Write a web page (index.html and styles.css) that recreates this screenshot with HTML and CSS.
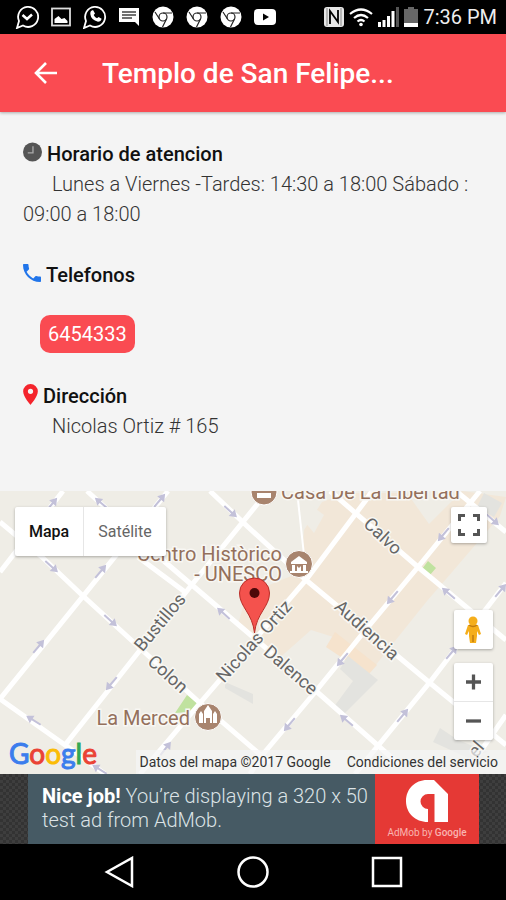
FILE: index.html
```html
<!DOCTYPE html>
<html lang="es">

<head>
    <meta charset="UTF-8">
    <meta name="viewport" content="width=device-width, initial-scale=1.0">
    <title>Templo de San Felipe</title>
    <link rel="stylesheet" href="styles.css">
</head>

<body>

    <!-- Phone status bar -->
    <div class="status-bar">
        <div class="notifications">
            <svg viewBox="0 0 24 24">
                <path d="M2 23l2-7A10 10 0 1 1 8 20.500z" fill="none" stroke="#fff" stroke-width="1.800" />
                <path d="M7.500 10l4.500 4 5-4.500" fill="none" stroke="#fff" stroke-width="2.500" />
            </svg>
            <svg viewBox="0 0 24 24">
                <rect x="3" y="3.500" width="18" height="17" fill="none" stroke="#ddd" stroke-width="1.800" />
                <path d="M5.500 18v-4l4-3 3 3 3-1 3 3v2z" fill="#fff" />
            </svg>
            <svg viewBox="0 0 24 24">
                <path d="M1 23l2-7A10 10 0 1 1 7 20.500z" fill="none" stroke="#fff" stroke-width="1.800" />
                <path d="M8 6l2-1 2 3.500-1.300 1.500q1 2.300 3.300 3.300l1.600-1.400 3 1.800q-.6 3-3.600 3Q8 15 7.300 9 7.200 7 8 6z" fill="#fff" />
            </svg>
            <svg viewBox="0 0 24 24">
                <path d="M2 3h20v18l-4-4H2z" fill="#fff" />
                <path d="M5 7h14M5 10h14M5 13h10" stroke="#444" stroke-width="1.300" />
            </svg>
            <svg viewBox="0 0 24 24"><use href="#chrome" /></svg>
            <svg viewBox="0 0 24 24"><use href="#chrome" /></svg>
            <svg viewBox="0 0 24 24"><use href="#chrome" /></svg>
            <svg viewBox="0 0 24 24">
                <rect x="1" y="4" width="22" height="16" rx="4" fill="#fff" />
                <path d="M10 8.500l6 3.500-6 3.500z" fill="#000" />
            </svg>
        </div>
        <div class="system">
            <svg class="nfc" viewBox="0 0 20 20">
                <rect x="0" y="0" width="20" height="20" rx="3" fill="#e8e8e8" />
                <path d="M6 17V4l8 11V3" fill="none" stroke="#000" stroke-width="1.800" />
                <path d="M3 1v18M17 1v18" stroke="#888" stroke-width="1" />
            </svg>
            <svg class="wifi" viewBox="0 0 24 20">
                <path d="M1 7q11-9 22 0M5 11q7-6 14 0M8.500 14.500q3.500-3 7 0" fill="none" stroke="#fff" stroke-width="2.200" />
                <circle cx="12" cy="17.500" r="1.800" fill="#fff" />
            </svg>
            <svg class="signal" viewBox="0 0 21 20">
                <path d="M0 15h3v5H0zM4.500 13h3v7h-3zM9 9h3v11H9zM13.500 4h3v16h-3z" fill="#fff" />
                <path d="M18 0h3v20h-3z" fill="#555" />
            </svg>
            <svg class="battery" viewBox="0 0 14 20">
                <path d="M4 0h6v2h4v14H0V2h4z" fill="#666" />
                <path d="M0 16h14v4H0z" fill="#fff" />
            </svg>
            <span class="clock">7:36 PM</span>
        </div>
    </div>

    <header>
        <button class="back" aria-label="Volver">
            <svg viewBox="0 0 24 24"><path d="M23 12H2M12 2L2 12l10 10" fill="none" stroke="#fff" stroke-width="2.600" /></svg>
        </button>
        <h1 class="title">Templo de San Felipe...</h1>
    </header>

    <main class="content">
        <section class="info">
            <h2>
                <svg class="icon-clock" viewBox="0 0 20 20">
                    <circle cx="10" cy="10" r="10" fill="#555" />
                    <path d="M10.500 4v7H5" fill="none" stroke="#aaa" stroke-width="1.400" />
                </svg>
                Horario de atencion
            </h2>
            <p>Lunes a Viernes -Tardes: 14:30 a 18:00 Sábado : 09:00 a 18:00</p>
        </section>

        <section class="info">
            <h2>
                <svg class="icon-phone" viewBox="3 3 18 18">
                    <path d="M6.620 10.790c1.440 2.830 3.760 5.140 6.590 6.590l2.200-2.200c.27-.27.67-.36 1.020-.24 1.120.37 2.330.57 3.570.57.55 0 1 .45 1 1V20c0 .55-.45 1-1 1C10.610 21 3 13.390 3 4c0-.55.45-1 1-1h3.500c.55 0 1 .45 1 1 0 1.250.2 2.450.57 3.570.11.35.03.74-.25 1.020z" fill="#2175ea" />
                </svg>
                Telefonos
            </h2>
            <a class="phone" href="tel:6454333">6454333</a>
        </section>

        <section class="info">
            <h2>
                <svg class="icon-pin" viewBox="5 2 14 20">
                    <path d="M12 2a7 7 0 0 0-7 7c0 5.250 7 13 7 13s7-7.750 7-13a7 7 0 0 0-7-7zm0 9.500a2.500 2.500 0 1 1 0-5 2.500 2.500 0 0 1 0 5z" fill="#f4242c" />
                </svg>
                Dirección
            </h2>
            <p>Nicolas Ortiz # 165</p>
        </section>
    </main>

    <div class="map">
        <svg class="map-canvas" viewBox="0 491 506 283" preserveAspectRatio="xMidYMid slice">
            <defs>
                <symbol id="chrome" viewBox="0 0 24 24">
                    <circle cx="12" cy="12" r="10.500" fill="#fff" />
                    <circle cx="12" cy="12" r="4" fill="none" stroke="#222" stroke-width="1.200" />
                    <path d="M12 8h9M8.500 14L4 7M15.500 14l-4 8" stroke="#222" stroke-width="1.200" />
                </symbol>
                <path id="arrow" d="M-9-1H1V-4.500L8 0 1 4.500V1H-9z" fill="#c3c1d9" />
            </defs>

            <!-- Blocks -->
            <rect x="0" y="491" width="506" height="283" fill="#efede6" />
            <path d="M304 530l18-28 25-9 60 0 22 31 33-33 44 6-6 19-47 55-26 30-52 65-32-26-32-10-35 31-38-37 9-30 54-22z" fill="#f2e7d8" />
            <path d="M335 632l42 33-9 10-42-28z" fill="#f6e3cd" />
            <path d="M304 500l20 15-10 18-15-18z" fill="#efede6" />
            <path d="M348 656l30 24-35 35-10-7 20-27-13-12zM225 682l28 12v10l-28-16zM440 728l18 12 30 12-20 6-35-16zM484 493l18 10-8 14-17-10z" fill="#e3e3df" />
            <path d="M428 561l8 7-6 7-8-6zM187 695l11 9-9 8-14 1z" fill="#c0e29f" />

            <!-- Streets -->
            <g fill="none" stroke="#fff" stroke-width="5">
                <path d="M0 699L168 491M65 745L190 587 268 491M140 774L200 703 306 580 366 500 372 491M264 753L316 691 368 627 418 567 480 491M250 774L264 753M355 774L430 682 506 583M480 752L506 715M0 572L63 491" />
                <path d="M0 522L42 557 82 595 200 703 270 763M87 491L165 562 253 637 316 691 400 765M138 557L185 592M210 491L248 527 306 580 430 683 506 745M330 491L418 567 506 640M456 491L506 532M0 699L65 745 105 774" />
            </g>
            <path d="M298 500L304 555" stroke="#fff" stroke-width="2" />

            <!-- One way arrows -->
            <use href="#arrow" transform="translate(52 567) rotate(42)" />
            <use href="#arrow" transform="translate(101 571) rotate(-50)" />
            <use href="#arrow" transform="translate(111 621) rotate(42)" />
            <use href="#arrow" transform="translate(101 503) rotate(-140)" />
            <use href="#arrow" transform="translate(160 500) rotate(-50)" />
            <use href="#arrow" transform="translate(52 504) rotate(-50)" />
            <use href="#arrow" transform="translate(231 512) rotate(42)" />
            <use href="#arrow" transform="translate(223 613) rotate(-138)" />
            <use href="#arrow" transform="translate(39 646) rotate(-50)" />
            <use href="#arrow" transform="translate(111 684) rotate(130)" />
            <use href="#arrow" transform="translate(33 720) rotate(-148)" />
            <use href="#arrow" transform="translate(166 748) rotate(-52)" />
            <use href="#arrow" transform="translate(99 769) rotate(-148)" />
            <use href="#arrow" transform="translate(342 660) rotate(130)" />
            <use href="#arrow" transform="translate(346 720) rotate(-140)" />
            <use href="#arrow" transform="translate(289 725) rotate(130)" />
            <use href="#arrow" transform="translate(403 715) rotate(-50)" />
            <use href="#arrow" transform="translate(443 535) rotate(130)" />
            <use href="#arrow" transform="translate(392 598) rotate(130)" />
            <use href="#arrow" transform="translate(448 593) rotate(-140)" />
            <use href="#arrow" transform="translate(493 520) rotate(42)" />
            <use href="#arrow" transform="translate(501 590) rotate(-50)" />
            <use href="#arrow" transform="translate(452 652) rotate(-50)" />

            <!-- Street names -->
            <g class="street">
                <text transform="translate(161 623) rotate(-50)">Bustillos</text>
                <text transform="translate(255 642) rotate(-48)">Nicolas Ortiz</text>
                <text transform="translate(167 675) rotate(42)">Colon</text>
                <text transform="translate(290 671) rotate(41)">Dalence</text>
                <text transform="translate(366 631) rotate(42)">Audiencia</text>
                <text transform="translate(382 537) rotate(43)">Calvo</text>
                <text transform="translate(477 750) rotate(-50)">el</text>
            </g>

            <!-- Places -->
            <g class="place">
                <text x="281" y="499">Casa De La Libertad</text>
                <text x="282" y="561" text-anchor="end">Centro Històrico</text>
                <text x="282" y="581" text-anchor="end">- UNESCO</text>
                <text x="190" y="725" text-anchor="end">La Merced</text>
            </g>
            <g stroke="#fff" stroke-width="1">
                <circle cx="264" cy="492" r="13" fill="#a8846e" />
                <circle cx="299" cy="564" r="13.500" fill="#a8846e" />
                <circle cx="208" cy="717" r="13.500" fill="#a8846e" />
            </g>
            <path d="M257 493h14v5h-14zM291 562l8-6 8 6v2h-16zM292 565h3v6h-3zM303 565h3v6h-3zM297 566l2 2 2-2v5h-4zM290 571h18v2h-18z" fill="#fff" />
            <path d="M199 723v-9l2-3 2 3v9zM213 723v-9l2-3 2 3v9zM204 723v-12l4-6 4 6v12h-2v-5h-4v5z" fill="#fff" />

            <!-- Marker -->
            <path d="M254.500 633c-2-20-15-26-15-40a15 15 0 0 1 30 0c0 14-13 20-15 40z" fill="#f4524d" stroke="#b92d28" />
            <circle cx="254.500" cy="593" r="5" fill="#4d0909" />
        </svg>

        <div class="map-type">
            <button class="active">Mapa</button>
            <button>Satélite</button>
        </div>

        <button class="fullscreen" aria-label="Pantalla completa">
            <svg viewBox="0 0 22 22"><path d="M1.500 7V1.500H7M15 1.500h5.500V7M20.500 15v5.500H15M7 20.500H1.500V15" fill="none" stroke="#555" stroke-width="3" /></svg>
        </button>

        <div class="map-controls">
            <button class="pegman" aria-label="Street View">
                <svg viewBox="0 0 16 27">
                    <path d="M3 9h10l3 9-2 1-2-4v5l-1 7H5l-1-7v-5l-2 4-2-1z" fill="#f5ae1b" />
                    <circle cx="8" cy="5" r="4.500" fill="#f5ae1b" />
                    <path d="M4 9q4 3 8 0M8 19v7" fill="none" stroke="#c07c10" stroke-width="1.500" />
                </svg>
            </button>
            <div class="zoom">
                <button aria-label="Acercar">
                    <svg viewBox="0 0 16 16"><path d="M0 8h16M8 0v16" stroke="#555" stroke-width="3.500" /></svg>
                </button>
                <button aria-label="Alejar">
                    <svg viewBox="0 0 16 16"><path d="M0 8h16" stroke="#555" stroke-width="3.500" /></svg>
                </button>
            </div>
        </div>

        <div class="map-footer">
            <a class="google" href="#"><span class="blue">G</span><span class="red">o</span><span class="yellow">o</span><span class="blue">g</span><span class="green">l</span><span class="red">e</span></a>
            <div class="credits">
                <span>Datos del mapa ©2017 Google</span>
                <a href="#">Condiciones del servicio</a>
            </div>
        </div>
    </div>

    <!-- Banner -->
    <div class="ad">
        <div class="ad-text"><b>Nice job!</b> You’re displaying a 320 x 50 test ad from AdMob.</div>
        <div class="ad-logo">
            <svg viewBox="0 0 42 42">
                <path d="M22 42C9 42 0 33 0 21S9 0 21 0h7l14 14v28H28.500V14H22a7.500 7.500 0 0 0 0 15z" fill="#fff" />
            </svg>
            <div>AdMob by <b>Google</b></div>
        </div>
    </div>

    <!-- Phone navigation -->
    <nav class="nav-bar">
        <button aria-label="Atrás">
            <svg viewBox="0 0 32 32"><path d="M29 2v28L4 16z" fill="none" stroke="#fff" stroke-width="2.500" /></svg>
        </button>
        <button aria-label="Inicio">
            <svg viewBox="0 0 32 32"><circle cx="16" cy="16" r="14.500" fill="none" stroke="#fff" stroke-width="2.500" /></svg>
        </button>
        <button aria-label="Recientes">
            <svg viewBox="0 0 32 32"><rect x="2" y="2" width="28" height="28" fill="none" stroke="#fff" stroke-width="2.500" /></svg>
        </button>
    </nav>

</body>

</html>
```

FILE: styles.css
```css
/* General Reset */
* {
    margin: 0;
    padding: 0;
    box-sizing: border-box;
}

body {
    font-family: Roboto, Arial, sans-serif;
    background-color: #f4f4f4;
    color: #333;
    min-height: 100vh;
    display: flex;
    flex-direction: column;
}

button {
    border: none;
    background: none;
    font-family: inherit;
    cursor: pointer;
}

a {
    color: inherit;
    text-decoration: none;
}

svg {
    display: block;
}

/* Status bar */
.status-bar {
    display: flex;
    justify-content: space-between;
    align-items: center;
    height: 34px;
    padding: 0 9px 0 15px;
    background-color: #000;
    color: #eee;
}

.notifications {
    display: flex;
    gap: 10px;
}

.notifications svg {
    width: 24px;
    height: 24px;
}

.system {
    display: flex;
    align-items: center;
    gap: 5px;
}

.system svg {
    height: 20px;
}

.nfc {
    width: 20px;
}

.wifi {
    width: 24px;
}

.signal {
    width: 21px;
}

.battery {
    width: 14px;
}

.clock {
    font-size: 20px;
}

/* Header */
header {
    display: flex;
    align-items: center;
    gap: 44px;
    height: 78px;
    padding: 0 34px;
    background-color: #fa4b52;
    color: white;
    box-shadow: 0 1px 3px rgba(0, 0, 0, 0.3);
}

.back svg {
    width: 24px;
    height: 24px;
}

.title {
    font-size: 28px;
    font-weight: 500;
}

/* Place details */
.content {
    flex: 1 0 auto;
    padding: 27px 23px 40px;
}

.info {
    margin-bottom: 28px;
    font-size: 20px;
    line-height: 30px;
}

.info:last-child {
    margin-bottom: 0;
}

.info h2 {
    display: flex;
    align-items: center;
    gap: 5px;
    font-size: 20px;
    font-weight: 500;
    color: #111;
}

.info h2 svg {
    margin-bottom: 4px;
}

.info p {
    padding-bottom: 3px;
    font-weight: 300;
    text-indent: 29px;
}

.icon-clock {
    width: 19px;
    height: 20px;
}

.icon-phone {
    width: 18px;
    height: 18px;
}

.icon-pin {
    width: 15px;
    height: 21px;
}

.phone {
    display: block;
    width: fit-content;
    margin: 25px 0 0 17px;
    padding: 4px 8px;
    border-radius: 10px;
    background-color: #fa4b52;
    color: white;
}

/* Map */
.map {
    position: relative;
    height: 283px;
    overflow: hidden;
}

.map-canvas {
    width: 100%;
    height: 100%;
}

.street text {
    font-size: 18px;
    fill: #666;
    stroke: #f8f7f3;
    stroke-width: 3px;
    paint-order: stroke;
    text-anchor: middle;
    dominant-baseline: middle;
}

.place text {
    font-size: 20px;
    fill: #94705c;
    stroke: #f8f7f3;
    stroke-width: 3px;
    paint-order: stroke;
}

.map-type,
.fullscreen,
.zoom,
.pegman {
    background-color: white;
    border-radius: 2px;
    box-shadow: 0 1px 3px rgba(0, 0, 0, 0.3);
}

.map-type {
    position: absolute;
    top: 16px;
    left: 15px;
    display: flex;
}

.map-type button {
    height: 49px;
    padding: 0 14px;
    font-size: 16px;
    color: #666;
}

.map-type .active {
    border-right: 1px solid #e6e6e6;
    font-weight: 500;
    color: #111;
}

.fullscreen {
    position: absolute;
    top: 16px;
    right: 19px;
    padding: 7px;
}

.fullscreen svg {
    width: 22px;
    height: 22px;
}

.map-controls {
    position: absolute;
    right: 13px;
    bottom: 34px;
    display: flex;
    flex-direction: column;
    gap: 14px;
}

.pegman {
    padding: 6px 11px;
}

.pegman svg {
    width: 16px;
    height: 27px;
}

.zoom button {
    display: block;
    padding: 11px 12px;
}

.zoom button + button {
    border-top: 1px solid #e6e6e6;
}

.zoom svg {
    width: 15px;
    height: 16px;
}

.map-footer {
    position: absolute;
    left: 0;
    right: 0;
    bottom: 0;
    display: flex;
    justify-content: space-between;
    align-items: flex-end;
    padding-left: 9px;
}

.google {
    font-family: Lato, sans-serif;
    font-size: 28px;
    line-height: 42px;
    -webkit-text-stroke: 1px;
}

.blue {
    color: #3b7ded;
}

.red {
    color: #ea4335;
}

.yellow {
    color: #fbbc05;
}

.green {
    color: #34a853;
}

.credits {
    display: flex;
    gap: 16px;
    padding: 0 8px 0 4px;
    background-color: rgba(245, 245, 245, 0.7);
    font-size: 14px;
    line-height: 24px;
}

/* Ad banner */
.ad {
    display: flex;
    height: 70px;
    padding: 0 27px 0 28px;
    background: repeating-conic-gradient(#333 0 25%, #3e3e3e 0 50%) 0 0 / 6px 6px;
}

.ad-text {
    flex: 1;
    padding: 10px 0 0 14px;
    background-color: #465a64;
    color: #dce3e6;
    font-size: 20px;
    font-weight: 300;
    line-height: 24px;
}

.ad-text b {
    font-weight: 700;
    color: white;
}

.ad-logo {
    display: flex;
    flex-direction: column;
    align-items: center;
    justify-content: center;
    gap: 5px;
    width: 104px;
    background-color: #e53935;
    color: #f9b4b0;
    font-size: 10px;
}

.ad-logo svg {
    width: 42px;
    height: 42px;
}

.ad-logo b {
    font-weight: 500;
}

/* Navigation bar */
.nav-bar {
    display: flex;
    justify-content: center;
    align-items: center;
    gap: 102px;
    height: 56px;
    background-color: #000;
}

.nav-bar svg {
    width: 32px;
    height: 32px;
}
```
